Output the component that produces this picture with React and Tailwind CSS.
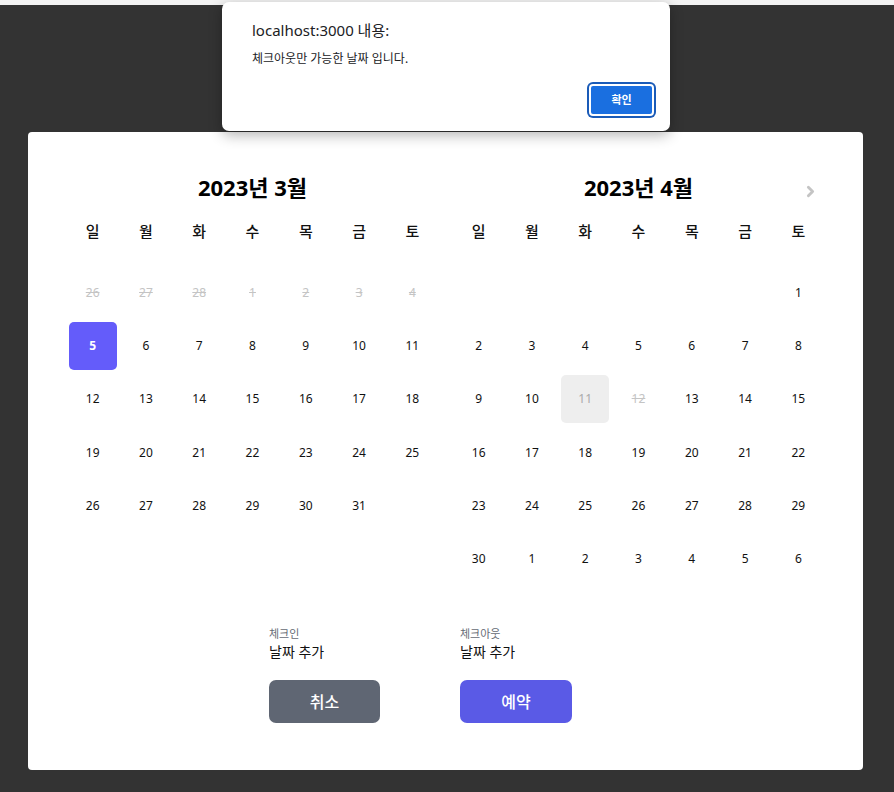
import React from 'react';
import { ChevronRight } from 'lucide-react';

const WEEKDAYS = ['일', '월', '화', '수', '목', '금', '토'];

// each cell: [label, kind]  kind: 'past' | 'normal' | 'selected' | 'hover' | 'empty'
const march = [
  ['26', 'past'], ['27', 'past'], ['28', 'past'], ['1', 'past'], ['2', 'past'], ['3', 'past'], ['4', 'past'],
  ['5', 'selected'], ['6'], ['7'], ['8'], ['9'], ['10'], ['11'],
  ['12'], ['13'], ['14'], ['15'], ['16'], ['17'], ['18'],
  ['19'], ['20'], ['21'], ['22'], ['23'], ['24'], ['25'],
  ['26'], ['27'], ['28'], ['29'], ['30'], ['31'], ['', 'empty'],
];

const april = [
  ['', 'empty'], ['', 'empty'], ['', 'empty'], ['', 'empty'], ['', 'empty'], ['', 'empty'], ['1'],
  ['2'], ['3'], ['4'], ['5'], ['6'], ['7'], ['8'],
  ['9'], ['10'], ['11', 'hover'], ['12', 'past'], ['13'], ['14'], ['15'],
  ['16'], ['17'], ['18'], ['19'], ['20'], ['21'], ['22'],
  ['23'], ['24'], ['25'], ['26'], ['27'], ['28'], ['29'],
  ['30'], ['1'], ['2'], ['3'], ['4'], ['5'], ['6'],
];

function DayCell({ label, kind }) {
  let box = 'w-[48px] h-[48px] rounded-[5px] flex items-center justify-center text-[12px]';
  if (kind === 'selected') box += ' bg-[#645cfa] text-white font-bold';
  else if (kind === 'hover') box += ' bg-[#eeeeee] text-[#aaaaaa]';
  else if (kind === 'past') box += ' text-[#c4c4c4] line-through';
  else box += ' text-[#111111]';
  return (
    <div className="h-[53.33px] flex items-center justify-center">
      <div className={box}>{label}</div>
    </div>
  );
}

function Month({ title, days, next }) {
  return (
    <div className="w-[373px] relative">
      <div className="h-[30px] flex items-center justify-center text-[22px] font-bold text-black">
        {title}
      </div>
      {next && (
        <div className="absolute right-[6px] top-[11px] text-[#c4c4c4]">
          <ChevronRight size={17} strokeWidth={4} />
        </div>
      )}
      <div className="grid grid-cols-7 mt-[14px] h-[30px]">
        {WEEKDAYS.map((w) => (
          <div key={w} className="flex items-center justify-center text-[15px] font-medium text-[#111111]">
            {w}
          </div>
        ))}
      </div>
      <div className="grid grid-cols-7 mt-[20px] h-[320px] content-start">
        {days.map(([label, kind], i) => (
          <DayCell key={i} label={label} kind={kind} />
        ))}
      </div>
    </div>
  );
}

export default function App() {
  return (
    <div
      className="relative w-[894px] h-[792px] bg-[#333333] overflow-hidden"
      style={{ fontFamily: '"Noto Sans", "Noto Sans CJK KR", sans-serif' }}
    >
      <div className="h-[5px] bg-[#f3f3f3]" />

      {/* Booking card */}
      <div className="mx-[28px] mt-[127px] w-[835px] bg-white rounded-[4px] px-[38px] pt-[40px] pb-[47px]">
        <div className="flex gap-[13px]">
          <Month title="2023년 3월" days={march} />
          <Month title="2023년 4월" days={april} next />
        </div>

        <div className="mt-[40px] pl-[203px] flex gap-[80px]">
          <div className="w-[111px]">
            <div className="text-[11px] leading-[16px] text-[#666b75]">체크인</div>
            <div className="text-[14px] leading-[20px] text-[#111111]">날짜 추가</div>
            <button className="mt-[18px] w-[111px] h-[43px] rounded-[7px] bg-[#5f6673] text-white text-[16px] font-medium">
              취소
            </button>
          </div>
          <div className="w-[112px]">
            <div className="text-[11px] leading-[16px] text-[#666b75]">체크아웃</div>
            <div className="text-[14px] leading-[20px] text-[#111111]">날짜 추가</div>
            <button className="mt-[18px] w-[112px] h-[43px] rounded-[7px] bg-[#5a5ae6] text-white text-[16px] font-medium">
              예약
            </button>
          </div>
        </div>
      </div>

      {/* Browser alert dialog */}
      <div className="absolute left-[222px] top-[2px] w-[448px] h-[129px] bg-white rounded-[7px] shadow-[0_4px_14px_rgba(0,0,0,0.3)] px-[30px] pt-[17px]">
        <div className="text-[15px] leading-[22px] text-[#202124]">localhost:3000 내용:</div>
        <div className="mt-[9px] text-[12px] leading-[18px] text-[#202124]">체크아웃만 가능한 날짜 입니다.</div>
        <div className="flex justify-end mt-[16px] -mr-[14px]">
          <button className="w-[65px] h-[32px] rounded-[4px] bg-[#1a6fe0] text-white text-[11px] font-bold border-2 border-white ring-2 ring-[#1a5bb8]">
            확인
          </button>
        </div>
      </div>
    </div>
  );
}
